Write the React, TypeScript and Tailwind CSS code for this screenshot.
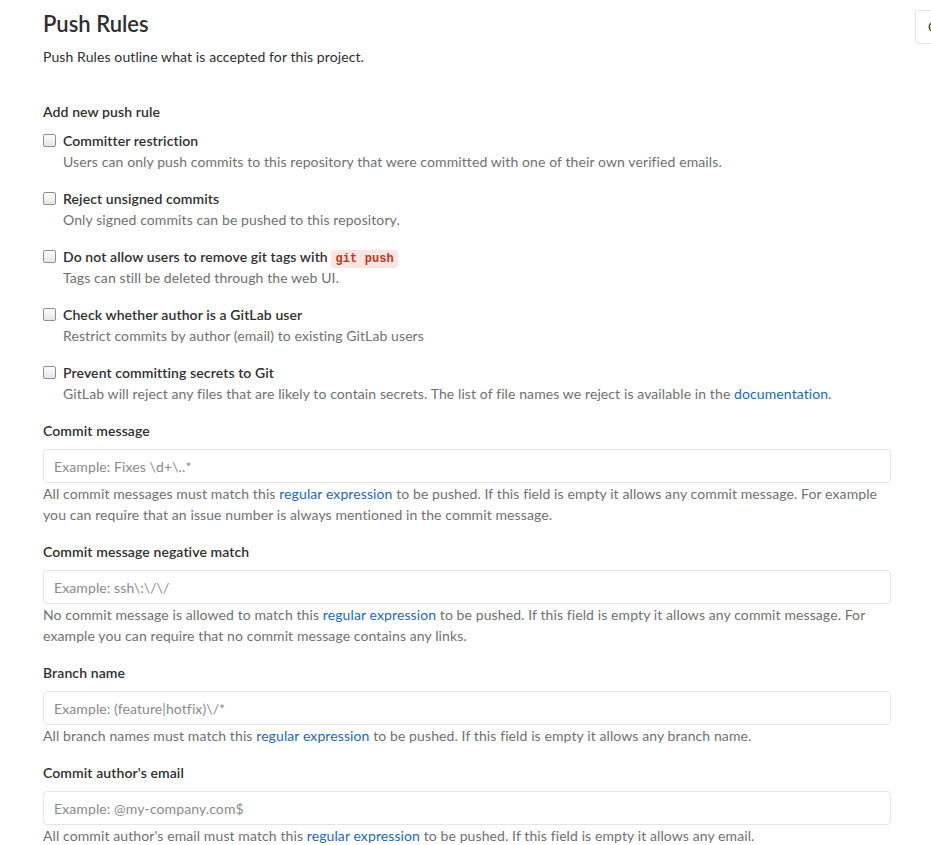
import React from "react";

const font = { fontFamily: "Lato, 'Noto Sans', sans-serif" };

interface Rule {
  title: React.ReactNode;
  help: React.ReactNode;
}

const Link = ({ children }: { children: React.ReactNode }) => (
  <a href="#" className="text-[#1b69b6]">
    {children}
  </a>
);

const rules: Rule[] = [
  {
    title: "Committer restriction",
    help: "Users can only push commits to this repository that were committed with one of their own verified emails.",
  },
  {
    title: "Reject unsigned commits",
    help: "Only signed commits can be pushed to this repository.",
  },
  {
    title: (
      <>
        Do not allow users to remove git tags with{" "}
        <code className="rounded-[3px] bg-[#fbe5e1] px-[4px] py-[2px] align-baseline font-['Liberation_Mono',monospace] text-[12px] leading-none text-[#c0341d]">
          git push
        </code>
      </>
    ),
    help: "Tags can still be deleted through the web UI.",
  },
  {
    title: "Check whether author is a GitLab user",
    help: "Restrict commits by author (email) to existing GitLab users",
  },
  {
    title: "Prevent committing secrets to Git",
    help: (
      <>
        GitLab will reject any files that are likely to contain secrets. The list of file names we reject is available in
        the <Link>documentation</Link>.
      </>
    ),
  },
];

const fields = [
  {
    label: "Commit message",
    placeholder: "Example: Fixes \\d+\\..*",
    help: (
      <>
        All commit messages must match this <Link>regular expression</Link> to be pushed. If this field is empty it allows
        any commit message. For example you can require that an issue number is always mentioned in the commit message.
      </>
    ),
  },
  {
    label: "Commit message negative match",
    placeholder: "Example: ssh\\:\\/\\/",
    help: (
      <>
        No commit message is allowed to match this <Link>regular expression</Link> to be pushed. If this field is empty it
        allows any commit message. For example you can require that no commit message contains any links.
      </>
    ),
  },
  {
    label: "Branch name",
    placeholder: "Example: (feature|hotfix)\\/*",
    help: (
      <>
        All branch names must match this <Link>regular expression</Link> to be pushed. If this field is empty it allows
        any branch name.
      </>
    ),
  },
  {
    label: "Commit author's email",
    placeholder: "Example: @my-company.com$",
    help: (
      <>
        All commit author's email must match this <Link>regular expression</Link> to be pushed. If this field is empty it
        allows any email.
      </>
    ),
  },
];

export default function App() {
  return (
    <div
      style={font}
      className="relative min-h-screen overflow-hidden bg-white text-[14px] leading-[21px] tracking-[0.1px] text-[#2e2e2e]"
    >
      <div className="absolute right-[-40px] top-[10px] flex h-[34px] w-[56px] items-center rounded-[3px] border border-[#e5e5e5] bg-white pl-[12px] text-[13px] text-[#2e2e2e]">
        C
      </div>

      <div className="w-[848px] pl-[43px] pt-[10px]" style={{ boxSizing: "content-box" }}>
        <h3 className="text-[22px] font-semibold leading-[28px] tracking-normal text-[#2e2e2e]">Push Rules</h3>
        <p className="mt-[8px] text-[#2e2e2e]">Push Rules outline what is accepted for this project.</p>

        <h4 className="mt-[34px] font-semibold">Add new push rule</h4>

        <div className="mt-[8px] flex flex-col gap-[16px]">
          {rules.map((rule, i) => (
            <div key={i} className="flex items-start">
              <input
                type="checkbox"
                className="mr-[7px] mt-[4px] h-[13px] w-[13px] shrink-0 appearance-none rounded-[2px] border border-[#8f8f8f] bg-gradient-to-b from-[#fdfdfd] to-[#e6e6e6]"
              />
              <div>
                <div className="h-[21px] font-semibold">{rule.title}</div>
                <div className="text-[#707070]">{rule.help}</div>
              </div>
            </div>
          ))}
        </div>

        <div className="mt-[16px] flex flex-col gap-[16px]">
          {fields.map((f) => (
            <div key={f.label}>
              <label className="block font-semibold">{f.label}</label>
              <input
                type="text"
                placeholder={f.placeholder}
                className="mt-[8px] block h-[34px] w-full rounded-[4px] border border-[#e5e5e5] bg-white px-[10px] text-[14px] tracking-[0.1px] placeholder:text-[#8a8a8a] focus:outline-none"
                style={font}
              />
              <p className="text-[#707070]">{f.help}</p>
            </div>
          ))}
        </div>
      </div>
    </div>
  );
}
